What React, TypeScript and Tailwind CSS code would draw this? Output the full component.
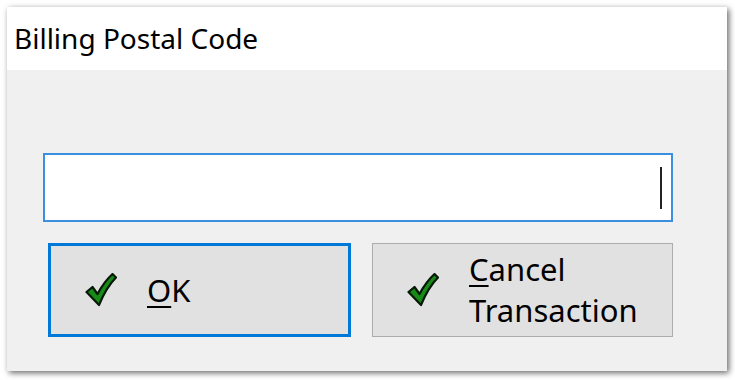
function Check() {
  return (
    <svg width="32" height="34" viewBox="0 0 32 34">
      <path
        d="M1.5 19 L7.5 14 L12.5 21 C17 12.5 22 6 27.5 1 L31 4.5 C24.5 11 19 20 14 32 Z"
        fill="#178a17"
        stroke="#061806"
        strokeWidth="2.2"
        strokeLinejoin="round"
      />
    </svg>
  );
}

export default function App() {
  return (
    <div className="w-[735px] h-[380px] bg-white pt-[7px] pl-[7px]" style={{ fontFamily: '"Noto Sans", "Open Sans", sans-serif' }}>
      <div className="w-[720px] h-[364px] flex flex-col shadow-[2px_2px_6px_rgba(0,0,0,0.6)]">
        {/* Title */}
        <div className="h-[63px] bg-white flex items-center pl-[7px] pb-[2px]">
          <span className="text-[28px] text-black">Billing Postal Code</span>
        </div>

        {/* Body */}
        <div className="flex-1 bg-[#f0f0f0] pl-[36px] pt-[83px]">
          <div className="w-[630px] h-[69px] bg-white border-2 border-[#3c8fe0] flex justify-end items-center pr-[9px]">
            <div className="w-[2px] h-[42px] bg-[#222]" />
          </div>

          <div className="flex gap-[21px] mt-[21px] ml-[5px]">
            <button className="w-[303px] h-[94px] bg-[#e1e1e1] border-[3px] border-[#0078d7] flex items-center pl-[34px]">
              <Check />
              <span className="ml-[30px] text-[31px] text-black leading-none">
                <span className="underline underline-offset-[4px] decoration-[2px]">O</span>K
              </span>
            </button>
            <button className="w-[301px] h-[94px] bg-[#e1e1e1] border border-[#adadad] flex items-center pl-[34px]">
              <Check />
              <span className="ml-[30px] text-[31px] text-black leading-[41px] text-left">
                <span className="underline underline-offset-[4px] decoration-[2px]">C</span>ancel
                <br />
                Transaction
              </span>
            </button>
          </div>
        </div>
      </div>
    </div>
  );
}
